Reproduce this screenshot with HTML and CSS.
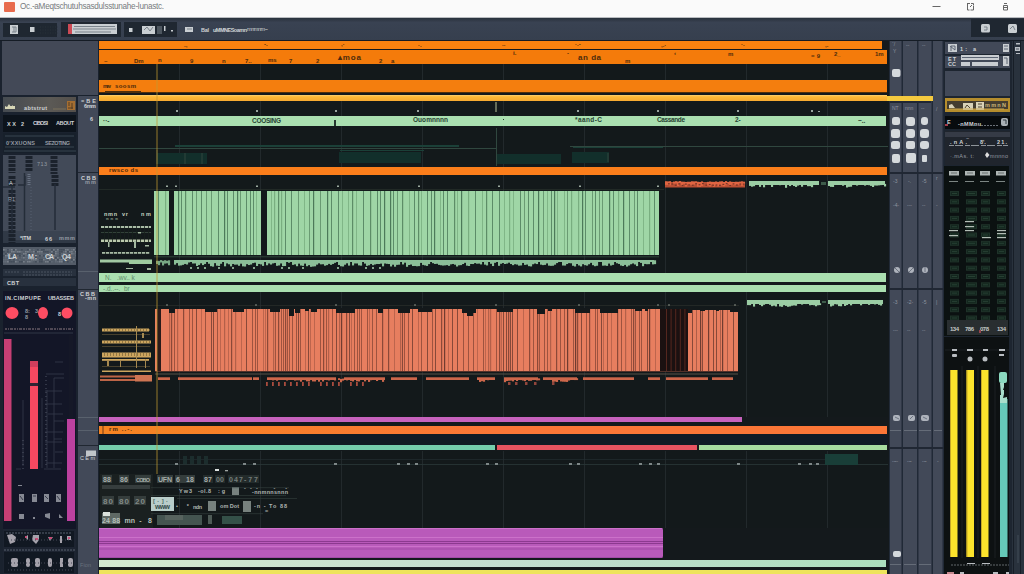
FILE: index.html
```html
<!DOCTYPE html>
<html lang="en">
<head>
<meta charset="utf-8">
<title>Arrangement</title>
<link rel="stylesheet" href="styles.css">
</head>
<body>
<div class="app">
  <header class="titlebar">
    <span class="app-icon"></span>
    <span class="title">Oc.-aMeqtschutuhsasdulsstunahe-lunastc.</span>
    <svg class="window-buttons" viewBox="925 0 99 18"><g fill="none" stroke="#666" stroke-width="1"><path d="M932.500 6.500h8M967 3.500h3M967.500 3v7h2M971 3.500h2.500v2M973.500 6v4h-3M970 7l2-2M1003.500 5.500h4v4.500h-4zM1004 3.500h3M1004 7.500h3"/></g></svg>
  </header>

  <nav class="toolbar">
    <svg viewBox="0 18 1024 22">
      <path fill="#1f2731" d="M3 23h54v14h-54zM61 22h60v15h-60zM124 22h53v15h-53zM971 19h53v18h-53z"/>
      <g fill="#c9ced2"><rect x="10" y="25" width="8" height="9"/><rect x="30" y="27" width="4.500" height="5"/><rect x="72" y="24" width="45" height="10"/><rect x="129" y="28" width="3.500" height="4"/><rect x="142" y="26" width="13" height="8"/><path d="M164 26h1.500v5h-1.500zM171 30h2v1.500h-2z"/><rect x="185" y="27" width="8" height="5"/><rect x="981" y="24" width="9" height="8.500" rx="1.500"/><rect x="1008" y="24" width="9" height="9" rx="1.500"/></g>
      <rect x="68" y="24" width="4" height="10" fill="#cc4a55"/>
      <path fill="none" stroke="#7a838b" stroke-width="1" d="M12 27h4v5h-4M14 27v5M74 26.500h41M73 29h43M75 32h36M144 30l3-3 3 4 3-4M187 29h5M984 27h3v3h-3M1010 29l3-3 2 4"/>
      <path stroke="#29323b" stroke-dasharray="1 1.500" d="M40 27h18M40 30h18M40 33h18"/>
      <rect x="157" y="26" width="5" height="8" fill="#4d565f"/>
      <text x="201" y="31.500" class="t light b" textLength="8">Bal</text><text x="213" y="31.500" class="t light b" textLength="34">uMMNESoamn</text><text x="247" y="31" class="t light" textLength="21">mnmnm~</text>
    </svg>
  </nav>

  <main class="workspace">
    <aside class="side">
      <div class="browser-blank"></div>
      <div class="side-columns">
        <section class="device">
          <div class="device-title"><svg viewBox="3 97 73 15"><path fill="#d6d6b6" d="M5 109v-3l2 1 2-3 2 3 2-2v4zM8 106h7v3h-7z"/><text x="24" y="110" class="t light b" textLength="23">abtstrut</text><rect x="67" y="101" width="8" height="9" fill="#a56e31"/><path stroke="#533c25" d="M69 102v4M72 103v6M68 108h5"/><path stroke="#7c725d" d="M53 109h13"/></svg></div>
          <div class="device-tabs"><svg viewBox="3 115 73 17"><text x="7" y="125.500" class="t light b" textLength="9">XX</text><text x="21" y="125.500" class="t light b" textLength="6">2</text><text x="33" y="125" class="t light b" textLength="15">CIBOSI</text><text x="56" y="125" class="t light b" textLength="18">ABOUT</text></svg></div>
          <div class="device-modes"><svg viewBox="3 133 73 20"><path stroke="#394451" fill="none" d="M5 136h69M5 147h69M4 151h72"/><text x="6" y="145" class="t mid b" textLength="29">0'XXUONS</text><text x="45" y="145" class="t mid b" textLength="25">SEZOTING</text></svg></div>
          <div class="device-faders"><svg viewBox="3 155 73 88">
            <path fill="#303946" d="M3 231h73v12h-73z"/><path fill="#3a4351" d="M14 231h62v9h-62z"/>
            <path stroke="#1b222c" stroke-width="7" stroke-dasharray="3 1" d="M12 156v17M29 156v16M54 156v18M55 175v11M12 176v10M12 190v55"/>
            <path fill="none" stroke="#242d38" stroke-width="1.500" d="M24.500 173v58M55 184v46M18 185h7v-9M3 187h12M12 186v46"/>
            <path stroke="#667080" stroke-width="3" stroke-dasharray="1 1" d="M29 174v12"/><path stroke="#566070" stroke-dasharray="1 2" d="M31 187v43"/>
            <text x="37" y="166" class="t mid" textLength="10">713</text><text x="9" y="185" class="t light">A</text><text x="8" y="201" class="t mid">R1</text>
            <text x="20" y="240" class="t light b" textLength="11">*ITM</text><text x="45" y="241" class="t light b" textLength="7">66</text><text x="59" y="240" class="t mid b" textLength="16">mmm</text></svg></div>
          <div class="device-pads"><svg class="noise" data-box="3,247,73,18" data-colors="#616a76,#434d5a,#555e6a,#78808a" viewBox="3 247 73 18"></svg></div>
          <div class="device-sub"><svg viewBox="3 267 73 22"><path fill="#28313e" d="M3 269h73v7h-73zM3 278h73v8h-73z"/><path stroke="#4b5461" stroke-dasharray="2 1" d="M5 272h14M23 272h49M23 275h49"/><text x="7" y="285" class="t light b" textLength="12">CBT</text></svg></div>
          <div class="synth"><svg viewBox="3 291 73 238">
            <text x="5" y="299.500" class="t light b" textLength="36">IN.CIMPUPE</text><text x="48" y="299.500" class="t light b" textLength="26">UBASSEB</text>
            <g fill="#ff4d63"><ellipse cx="12" cy="313" rx="6.500" ry="6"/><ellipse cx="43" cy="313" rx="5" ry="6"/><ellipse cx="67" cy="313" rx="5.500" ry="5.500"/></g>
            <text x="25" y="313" class="t mid b">8:</text><text x="25" y="319" class="t mid b">8</text><text x="35" y="313" class="t mid b">3</text><text x="58" y="316" class="t light b">8</text>
            <path stroke="#8d7a83" stroke-dasharray="2 1 1 1 3 1" d="M5 329h35M45 329h28"/><path stroke="#303746" d="M4 333h69"/>
            <path stroke="#151827" stroke-width="4" d="M71 335v85"/>
            <rect x="4" y="339" width="7.500" height="182" fill="#c63f74"/><rect x="67" y="419" width="8" height="102" fill="#bc419f"/>
            <rect x="30" y="361" width="8" height="108" fill="#f74860"/><path fill="#d33e5c" d="M30 361h8v6h-8z"/><path fill="#312332" d="M30 383h8v3h-8z"/>
            <path fill="none" stroke="#353b4b" stroke-width=".8" d="M55 362h8M46 374h18M54 378h10M42 398v70M47 390v78M54 378v90M45 391h17M45 404h17M48 414h15M54 421h10M45 432h18M54 439h8M45 442h17M55 452h8M46 463h16M44 469h17M16 469h5M23 400v66"/>
            <path stroke="#505566" stroke-width="1" stroke-dasharray="1 3" d="M46 376v92M23 440v30"/>
            <g fill="#868993"><rect x="19" y="494" width="5" height="8"/><rect x="32" y="494" width="5" height="8"/><rect x="44" y="494" width="5" height="8"/><rect x="56" y="494" width="5" height="8"/><path d="M19 514h5v5h-5zM45 514l5-1v6l-5-2zM33 517h2v2h-2zM59 514l4 4h-4zM18 485h4v1h-4z"/></g>
            <path stroke="#222638" stroke-width=".8" d="M20 496l3 4M33 496h3M45 496l3 3M57 496l3 4"/></svg></div>
          <div class="synth-pads"><svg viewBox="3 529 73 45"><path fill="#111822" d="M4 531h70v16h-70zM4 552h70v21h-70z"/><path stroke="#59606e" stroke-dasharray="2 1" d="M4 550h71M6 533h66"/><g fill="#a5a2ab"><path d="M7 535l5-1 4 3-1 5-5 2zM25 537l3-2v5zM33 535h6v5l-3 4-4-4zM48 537h5l-3 4zM60 536h2v7h-2zM67 536h4v4h-4z"/><rect x="11" y="558" width="7" height="9" rx="2"/><rect x="26" y="558" width="4" height="9" rx="2"/><rect x="35" y="558" width="5" height="9" rx="2"/><rect x="48" y="558" width="4" height="9" rx="2"/><rect x="60" y="558" width="3" height="9"/><rect x="68" y="558" width="5" height="9" rx="2"/></g><path stroke="#c54d76" stroke-width="2" d="M25 537h2M35 539h3M49 538h3M68 538h2"/><path stroke="#464957" stroke-dasharray="1 2" d="M8 563h64M8 540h64M8 570h64"/></svg></div>
        </section>
        <section class="heads"><svg viewBox="78 96 20 478">
          <g class="b"><text x="81" y="103" class="t light" textLength="15">=BE</text><text x="84" y="108" class="t light" textLength="12">6mm</text><text x="90" y="121" class="t light" font-size="7">6</text><text x="81" y="180" class="t light" textLength="15">CBB</text><text x="85" y="184" class="t mid" textLength="11">mm</text><text x="80" y="296" class="t light" textLength="15">CBB</text><text x="85" y="300" class="t light" textLength="11">-mn</text></g>
          <text x="80" y="460" class="t light" textLength="15">CEm</text><rect x="86" y="450.500" width="10" height="5.500" fill="#c0c5c9"/>
          <path stroke="#202731" d="M78 172.500h20M78 289.500h20M78 445.500h20"/><path stroke="#59616d" d="M78 271.500h20M78 417.500h20M78 430.500h20"/><text x="80" y="567" class="t dim" textLength="11">Fion</text>
        </svg></section>
      </div>
    </aside>

    <section class="timeline">
      <div class="bar ruler"><svg viewBox="99 41 783 8"><g class="ink b"><text x="184" y="47">.,</text><text x="264" y="46">-.</text><text x="341" y="46">,·</text><text x="418" y="47">·.</text><text x="502" y="46">..</text><text x="575" y="46">·.-</text><text x="661" y="47">,.·</text><text x="741" y="46">·.</text><text x="825" y="47">,.</text></g></svg></div>
      <div class="bar markers"><svg viewBox="99 50 788 14"><g class="ink b"><text x="104" y="63">~</text><text x="134" y="63">Dm</text><text x="158" y="62">n</text><text x="190" y="63">9</text><text x="222" y="63">n</text><text x="245" y="63">7..</text><text x="268" y="62">ms</text><text x="289" y="63">7</text><text x="316" y="63">2</text><text x="338" y="60" class="big" textLength="23">▴moa</text><text x="379" y="63">2</text><text x="391" y="63">a</text><text x="513" y="55">i.</text><text x="567" y="55">-</text><text x="578" y="60" class="big" textLength="23">an da</text><text x="625" y="63">m</text><text x="674" y="55">‹</text><text x="728" y="56">m</text><text x="811" y="58" textLength="9">=9</text><text x="834" y="56">2_</text><text x="875" y="56">1m</text></g></svg></div>
      <div class="gap grid h16"></div>
      <div class="bar section"><svg viewBox="99 80 788 13"><g class="ink b"><text x="103" y="88" textLength="8">mw</text><text x="115" y="88" textLength="21">soosm</text></g><path stroke="#51300c" d="M105 91.500h36M99 92.500h788"/></svg></div>
      <div class="bar automation"></div>
      <div class="gap grid h15"><svg viewBox="99 101 789 15"><path fill="#99a59f" d="M176 110h2v2h-2zM256 110h2v2h-2zM335 110h2v2h-2zM417 110h2v2h-2zM577 110h2v2h-2zM657 110h2v2h-2zM737 110h2v2h-2zM811 110h2v2h-2zM818 111h2v1h-2z"/><path fill="#646d59" d="M495 102h2v10h-2z"/></svg></div>
      <div class="bar mint cue"><svg viewBox="99 116 787 10"><g class="green-ink b"><text x="103" y="122.500">··-</text><text x="252" y="123" textLength="29">COOSING</text><text x="413" y="122" textLength="35">Ouomnnnn</text><text x="575" y="122" textLength="27">*aand-C</text><text x="657" y="122" textLength="28">Cassande</text><text x="735" y="122">2-</text><text x="858" y="123">~..</text></g><path fill="#26362f" d="M334 120h2v6h-2zM503 119h1v1h-1z"/></svg></div>
      <div class="gap grid h40"><svg viewBox="99 126 789 41"><path fill="#122f2b" d="M157 153h50v11h-50zM339 152h82v11h-82zM497 154h64v10h-64zM572 152h37v11h-37z"/><path fill="#1b4038" d="M175 145h284v2h-284zM340 150h84v1h-84zM573 147h90v1h-90z"/><path stroke="#30473f" fill="none" d="M99 148.500h397M570 146.500h318M157 150v14M185 153v11M202 153v11M496.500 128v38M608 153v9"/></svg></div>
      <div class="bar orange"><svg viewBox="99 167 788 8"><text x="109" y="172" class="ink b" textLength="29">rwsco ds</text></svg></div>
      <div class="track drums grid"><svg id="drums" viewBox="99 175 789 98"></svg></div>
      <div class="bar mint b8"><svg viewBox="99 273 787 9"><text x="105" y="280" class="green-ink faint">N.   .wv.. k</text></svg></div>
      <div class="bar mint b6"><svg viewBox="99 285 787 7"><text x="103" y="290.500" class="green-ink faint">-.d..--.  br</text></svg></div>
      <div class="track bass grid"><svg id="bass" viewBox="99 292 789 125"></svg></div>
      <div class="bar purple-line"></div>
      <div class="bar coral-line"><svg viewBox="99 426 788 8"><text x="109" y="431" class="ink b" textLength="23">rm ..-.</text><path stroke="#713817" d="M103 426v8"/></svg></div>
      <div class="gap h11 navy"></div>
      <div class="scenes"><i class="scene teal"></i><i class="scene red"></i><i class="scene lime"></i></div>
      <div class="track sampler grid"><svg id="sampler" viewBox="99 451 789 77"></svg></div>
      <div class="audio-clip"><svg viewBox="99 528 564 30"><path stroke="#813285" d="M99 541.500h564M99 543.500h564" opacity=".8"/><path stroke="#cc71ca" d="M99 528.500h564M99 546.500h564M99 537.500h564"/><path stroke="#a34ca7" d="M99 549h564M99 557.500h564"/></svg></div>
      <div class="bar pale"></div>
      <div class="bar yellow"></div>
      <svg class="playhead" viewBox="0 0 2 410"><path d="M1 0v410" stroke="#c29a32" stroke-width="1" opacity=".75"/></svg>
      <i class="automation-tail"></i>
    </section>

    <section class="strips"><svg viewBox="889 41 55 533">
      <path fill="#202936" d="M889 41h55v533h-55z"/><g fill="#424958"><path d="M890 41h11.500v533h-11.500zM903 41h14v533h-14zM918.500 41h13v533h-13zM933 41h9.500v533h-9.500z"/></g>
      <path stroke="#202733" stroke-width="2" d="M889 102h42M889 173h55M889 289h55M889 448h55"/>
      <path stroke="#747b86" d="M890 430.500h11M904 430.500h13M919 430.500h12M934 430.500h8M890 564.500h11M904 564.500h12M919 564.500h12" opacity=".7"/>
      <g fill="#d5d9dc"><rect x="892" y="69" width="8.500" height="8" rx="2"/><rect x="892" y="117" width="8" height="8" rx="2.500"/><rect x="906" y="117" width="9" height="9" rx="3"/><rect x="921" y="117" width="7" height="8" rx="3"/><rect x="891" y="129" width="9" height="9" rx="2.500"/><rect x="906" y="129" width="9" height="9" rx="3"/><rect x="920" y="129" width="9" height="9" rx="3"/><rect x="891" y="141" width="9" height="8" rx="2.500"/><rect x="906" y="141" width="9" height="8" rx="2"/><rect x="920" y="141" width="9" height="8" rx="3"/><rect x="892" y="154" width="8" height="9" rx="2"/><rect x="906" y="153" width="10" height="10" rx="2"/><rect x="922" y="155" width="5" height="7" rx="1"/><rect x="893" y="551" width="8" height="6" rx="2"/></g>
      <g class="strip-text"><text x="892" y="110">NT</text><text x="905" y="110">nnn</text><text x="921" y="110">--</text><text x="936" y="111" font-size="9">/</text><text x="892" y="46">`/</text><text x="893" y="53">Y</text><text x="906" y="47">--</text><text x="922" y="47">--</text><text x="893" y="183">-3</text><text x="908" y="183">-.</text><text x="922" y="183">-5</text><text x="936" y="180">r</text><text x="893" y="207">-4-</text><text x="907" y="207">---</text><text x="922" y="207">--</text><text x="936" y="207">-</text><text x="893" y="304">-3</text><text x="907" y="304">-2-</text><text x="922" y="304">-5</text><text x="936" y="304">|</text><text x="893" y="332">---</text><text x="907" y="332">--</text><text x="922" y="332">--</text><text x="892" y="463">-~-</text><text x="907" y="463">-~</text><text x="922" y="463">-~</text><text x="937" y="463">-</text></g>
      <g fill="#aeb3bc"><circle cx="897" cy="270" r="3"/><circle cx="911" cy="270" r="3"/><circle cx="925" cy="270" r="3"/><rect x="893" y="415" width="7" height="6" rx="2"/><rect x="908" y="415" width="7" height="6" rx="2"/><rect x="921" y="415" width="8" height="6" rx="2"/></g><path stroke="#6c7380" d="M895 268l4 4M909 272l4-4M925 267v5M895 417l4 2M910 419l3-3M923 417l4 2" fill="none"/>
    </svg></section>

    <aside class="mixer">
      <div class="mix-head"><svg viewBox="944 41 68 56"><path fill="#424958" d="M945 42h65v12h-65zM945 56h65v12h-65zM945 71h65v25h-65z"/><g fill="#c9cdd1"><path d="M948 44h9v8h-9zM1003 44h6v8h-6zM961 55h38v5h-38zM961 62h9v4h-9zM972 62h26v4h-26zM1003 56h6v10h-6z"/></g><path stroke="#5c6573" fill="none" d="M950 46l5 4v-4h-4v5M1004 46h4M1004 49h4M962 57.500h36M1004 58h3v6"/><text x="960" y="51" class="t light b" textLength="16">1: a</text><text x="948" y="61" class="t light b" textLength="8">ET</text><text x="948" y="66" class="t light b" textLength="8">CC</text></svg></div>
      <div class="mix-gold"><svg viewBox="945 98 65 14"><path fill="#443d30" d="M947 101h61v8h-61z"/><g fill="#d9d2b8"><path d="M949 108v-3l3-1 3 4zM963 103h10v7h-10zM976 102h8v8h-8z"/></g><path stroke="#514632" fill="none" d="M965 108l2-3 3 3M978 104h4M978 107h4"/><text x="985" y="107" class="t gold b" textLength="21">mmnN</text><path stroke="#c6a655" d="M949 109h55"/></svg></div>
      <div class="mix-select"><svg viewBox="945 116 65 13"><text x="947" y="124" class="t light b" font-size="8">E</text><text x="958" y="125.500" class="t light b" textLength="23">-nMMnu</text><path stroke="#6b7078" stroke-dasharray="2 1" d="M960 125.500h39"/><rect x="1001" y="118" width="7" height="8" rx="2" fill="#a9afb3"/><path d="M1003 120h3v4" fill="none" stroke="#333b41"/><rect x="945" y="124" width="3" height="2" fill="#a33c4a"/></svg></div>
      <div class="mix-info"><svg viewBox="945 131 65 34"><path fill="#363b46" d="M945 132h65v5h-65z"/><path stroke="#8e949a" d="M949 145.500h59" stroke-dasharray="5 1 8 2"/><text x="950" y="144" class="t light b" textLength="17">.nA.</text><text x="966" y="140" class="t mid">~</text><text x="980" y="144" class="t light b">8'.</text><text x="997" y="144" class="t light b" textLength="10">21.</text><text x="950" y="158" class="t mid" textLength="24">·.mAs. t:</text><text x="990" y="158" class="t mid" textLength="18">mnnno</text><path fill="#ddd" d="M987 152l2.500 3-2.500 3-2-3z"/></svg></div>
      <div class="mix-leds"><svg id="leds" viewBox="944 166 68 170"></svg></div>
      <div class="mix-meters"><svg viewBox="944 337 68 237">
        <path fill="#0d1112" d="M944 337h65v237h-65z"/><path stroke="#303437" d="M945 350h64M962 366v192M978 366v192M995 366v192" opacity=".45"/>
        <g fill="#fce32c"><path d="M950 370h7.500v187h-7.500zM966.500 370h7.500v187h-7.500zM981 370h7.500v187h-7.500z"/></g><g fill="#c6a827"><path d="M950 370h1v187h-1zM966.500 370h1v187h-1zM981 370h1v187h-1z"/></g>
        <path fill="#65c9b9" d="M1000 399h7.500v158h-7.500z"/><rect x="999" y="372" width="8" height="11" rx="2" fill="#8bd9bf"/><path fill="#a8decb" d="M1000 383h4v4l-1 3h1v4l-1 4 4-1v6h-7v-8h1z"/>
        <g fill="#b9bdc1"><rect x="952" y="349" width="5" height="2"/><rect x="952" y="354" width="5" height="3" rx="1"/><rect x="967" y="349" width="6" height="2"/><circle cx="970" cy="359" r="2.500"/><rect x="983" y="349" width="5" height="2"/><circle cx="985" cy="359" r="2.500"/><rect x="999" y="349" width="6" height="2"/><rect x="999" y="354" width="5" height="2"/><path d="M967 563h8v1h-8zM982 563h8v1h-8zM960 572h4v2h-4zM993 572h5v2h-5zM1006 572h3v2h-3z"/></g><path fill="#c4888e" d="M947 572h7v2h-7z"/><path stroke="#63686b" stroke-dasharray="2 1" d="M951 565h58"/>
      </svg></div>
    </aside>
    <div class="edge"><svg viewBox="1012 41 12 533"><path fill="none" stroke="#171e27" d="M1013.500 41v533M1020.500 41v533"/><path stroke="#434d58" d="M1018 535v28"/><path fill="#b9bec4" d="M1016 43h4v1.500h-4zM1015 47h5v4h-5zM1016 53h4v1h-4z"/><path stroke="#4b545e" d="M1016 49h3"/></svg></div>
  </main>
</div>
<script src="app.js"></script>
</body>
</html>
```

FILE: styles.css
```css
* { box-sizing: border-box; }
body { margin: 0; background: #141a22; font-family: "Liberation Sans", Arial, sans-serif; }
svg { display: block; width: 100%; height: 100%; }
text { font-family: "Liberation Sans", Arial, sans-serif; font-size: 6px; white-space: pre; }
.app { display: flex; flex-direction: column; width: 1024px; height: 574px; overflow: hidden; }

.titlebar { display: flex; align-items: flex-start; height: 18px; flex: none; background: #fafafa; border-bottom: 1px solid #b9bcc0; padding: 2px 0 0 4px; }
.app-icon { width: 11px; height: 10px; border-radius: 1px; background: #e86b4d; }
.title { margin-left: 5px; width: 160px; font-size: 8.200px; line-height: 10px; letter-spacing: -.28px; color: #777a7e; white-space: nowrap; }
.window-buttons { width: 99px; height: 18px; margin: -2px 0 0 auto; }
.toolbar { height: 23px; flex: none; background: linear-gradient(#29313c, #394252 20%, #363f4e); border-bottom: 1px solid #151c25; }
.toolbar svg { height: 22px; }
.workspace { display: flex; flex: 1; min-height: 0; }

.t { font-size: 5.500px; }
.b, .b text { font-weight: bold; }
.light { fill: #d0d4d6; }
.mid { fill: #949ba3; }
.dim { fill: #69717e; }
.gold { fill: #cbb678; }
.ink, .ink text { fill: #4d2b0c; font-size: 6px; }
.ink .big { font-size: 8px; }
.green-ink, .green-ink text { fill: #263f32; font-size: 6.500px; }
.faint { opacity: .55; }
.strip-text text { fill: #8e95a0; font-size: 5px; }

.side { width: 99px; flex: none; display: flex; flex-direction: column; padding-left: 2px; background: #1a222e; }
.browser-blank { height: 54px; margin-right: 1px; background: #434957; margin-bottom: 1px; }
.side-columns { display: flex; height: 478px; }
.device { width: 76px; padding: 1px 2px 0 1px; display: flex; flex-direction: column; }
.device-title { height: 15px; background: linear-gradient(90deg, #454b51, #5b5955 65%, #534f4b); margin-bottom: 3px; }
.device-tabs { height: 17px; background: #0c131b; margin-bottom: 1px; }
.device-modes { height: 20px; background: #17202b; margin-bottom: 2px; }
.device-faders { height: 88px; background: #424a58; margin-bottom: 4px; }
.device-pads { height: 18px; background: #545c68; margin-bottom: 2px; }
.device-sub { height: 22px; margin-bottom: 2px; }
.synth { height: 238px; background: #131627; }
.synth-pads { height: 45px; background: #1d2431; }
.heads { width: 20px; background: #424958; }

.timeline { position: relative; width: 790px; flex: none; background: #14191c; display: flex; flex-direction: column; align-items: flex-start; }
.bar { flex: none; width: 788px; }
.ruler { width: 783px; height: 8px; background: #fa820f; margin-bottom: 1px; }
.markers { height: 14px; background: #f47b0b; }
.section { height: 13px; background: #f47e0e; margin-bottom: 2px; }
.automation { height: 6px; background: linear-gradient(#ffd070, #ffb935 30%, #f7aa31); }
.mint { width: 787px; background: #aadfb0; }
.cue { height: 10px; }
.orange { height: 8px; background: #fb7e1b; }
.b8 { height: 9px; margin-bottom: 3px; }
.b6 { height: 7px; }
.purple-line { width: 643px; height: 5px; background: #c762bd; margin-bottom: 4px; }
.coral-line { height: 8px; background: linear-gradient(90deg, #f58422, #fb7637 50%); }
.pale { width: 787px; height: 7px; margin-top: 2px; background: linear-gradient(90deg, #d4ead0, #c3ddd0 50%, #acdfbd); }
.yellow { height: 4px; margin-top: 3px; background: #eee45c; }
.gap, .track { width: 789px; flex: none; }
.h11 { height: 11px; }
.h15 { height: 15px; }
.h16 { height: 16px; }
.h40 { height: 41px; }
.navy { background: #101a25; }
.grid { background: repeating-linear-gradient(90deg, transparent 0 80px, #22292c 80px 81px) 0 0 #13191b; }
.drums { height: 98px; }
.bass { height: 125px; }
.scenes { display: flex; width: 788px; height: 6px; gap: 2px; flex: none; padding-bottom: 1px; }
.scene { display: block; }
.teal { width: 396px; background: #74cdae; }
.red { width: 200px; background: #e65361; }
.lime { flex: 1; background: #a7dca0; }
.sampler { height: 77px; }
.audio-clip { width: 564px; height: 30px; background: #b95aba; border-radius: 0 2px 2px 0; overflow: hidden; flex: none; }
.playhead { position: absolute; left: 57px; top: 23px; width: 2px; height: 410px; }
.automation-tail { position: absolute; left: 788px; top: 55px; width: 46px; height: 5px; background: #f5ca3f; z-index: 2; }

.strips { width: 55px; flex: none; }
.mixer { width: 68px; flex: none; display: flex; flex-direction: column; background: #1d2530; }
.mix-head { height: 56px; margin-bottom: 1px; }
.mix-gold { width: 65px; height: 14px; margin-left: 1px; background: #b58d2d; margin-bottom: 4px; }
.mix-select { width: 65px; height: 13px; margin-left: 1px; background: #080b0e; margin-bottom: 2px; }
.mix-info { width: 65px; height: 34px; margin-left: 1px; background: #20252d; margin-bottom: 1px; }
.mix-leds { height: 170px; margin-bottom: 1px; }
.mix-meters { height: 237px; }
.edge { width: 12px; background: #29323d; }
```

FILE: app.js
```js
const NS = 'http://www.w3.org/2000/svg';
let seed = 37;
const rnd = () => (seed = (seed * 16807) % 2147483647) / 2147483647;
const byId = id => document.getElementById(id);

function rect(svg, x, y, w, h, fill) {
  const r = document.createElementNS(NS, 'rect');
  Object.entries({ x, y, width: w, height: h, fill }).forEach(([k, v]) => r.setAttribute(k, v));
  svg.appendChild(r);
}
function label(svg, x, y, value, fill, width, size = 5.5) {
  const t = document.createElementNS(NS, 'text');
  t.setAttribute('x', x); t.setAttribute('y', y); t.setAttribute('fill', fill);
  t.setAttribute('class', 'b');
  t.style.fontSize = size + 'px';
  if (width) t.setAttribute('textLength', width);
  t.textContent = value;
  svg.appendChild(t);
}
function stripes(svg, x0, x1, y0, y1, fill, lines, step = 2) {
  rect(svg, x0, y0, x1 - x0, y1 - y0, fill);
  for (let x = x0 + 4; x < x1 - 2; x += step + Math.floor(rnd() * 5)) {
    rect(svg, x, y0, rnd() > .7 ? 1.2 : .8, y1 - y0, lines[Math.floor(rnd() * lines.length)]);
  }
}
function fringe(svg, x0, x1, y, h, fill, density = .9) {
  for (let x = x0; x < x1; x += 2) {
    if (rnd() < density) rect(svg, x, y + rnd(), 2.1, h * (.4 + rnd() * .6), fill);
  }
}

// Drum track: chord clips, their velocity lane and the note list
const drums = byId('drums');
rect(drums, 99, 189, 565, .6, '#2c3430');
[166, 175, 256, 337, 418, 498, 579, 657].forEach(x => rect(drums, x, 185.5, 2, 1.5, '#9caaa0'));
[[154, 169], [174, 261], [267, 659]].forEach(([a, b]) =>
  stripes(drums, a, b, 191, 255, '#9fd6a6', ['#4c7a59', '#5d8d67', '#79ae80', '#4c7a59'], 3));
rect(drums, 154, 256.5, 505, .7, '#3d5948');
fringe(drums, 156, 172, 260, 5, '#78a884');
fringe(drums, 174, 655, 260, 6, '#8bbf98');
rect(drums, 174, 260, 480, 2, '#8bbf98');
for (let x = 190; x < 380; x += 7) if (rnd() > .35) rect(drums, x, 267, 2, 2, '#85a68d');
label(drums, 104, 216, 'nmn  vr', '#c6d6c1', 24);
label(drums, 141, 216, 'nm', '#c6d6c1', 10);
label(drums, 106, 220, 'mmm  .', '#8ba18e', 20, 3);
rect(drums, 101, 226, 50, 2, '#a9bca6');
rect(drums, 101, 232, 50, .7, '#415347');
rect(drums, 101, 239.5, 50, 2.5, '#bbc9ac');
rect(drums, 102, 252, 48, 1.8, '#a6b8a2');
rect(drums, 100, 259.5, 52, 3, '#a2c9a3');
rect(drums, 129, 260, 23, 4, '#9fcc9f');
for (let x = 104; x < 151; x += 4) {
  rect(drums, x, 226, .8, 17, '#17211c');
  rect(drums, x + 1, 251, .8, 3, '#17211c');
}
[[108, 242, 1.5, 5], [134, 241, 2, 7], [138, 232, 3, 1.5], [145, 245, 4, 1.5], [126, 268, 7, 1], [147, 268, 4, 2]].forEach(a => rect(drums, ...a, '#a3b8a0'));
rect(drums, 665, 182, 80, 5.500, '#b94f34');
fringe(drums, 665, 745, 181, 5, '#e06542');
for (let x = 668; x < 743; x += 3.4) rect(drums, x, 183 + rnd() * 2, 1.8, 1.2, '#763527');
function tail(svg, x0, x1, y) {
  rect(svg, x0, y, x1 - x0, 4, '#9bcda4');
  fringe(svg, x0, x1, y + 2.5, 3.5, '#9bcda4', .6);
}
tail(drums, 749, 819, 181); rect(drums, 821, 182, 5, 3, '#3d5b4a'); tail(drums, 828, 885, 181);

// Bass track: clip silhouette with notched top edge
const bass = byId('bass');
rect(bass, 99, 305, 640, .6, '#30332f');
[166, 255, 335, 414, 495, 578, 657, 668, 734].forEach(x => rect(bass, x, 304.5, 2, 1, '#8a8f85'));
stripes(bass, 155, 660, 309, 371, '#e77e5f', ['#713c30', '#8c4938', '#b36049', '#8c4938']);
rect(bass, 157, 309, 4, 62, '#2a1b1a');
rect(bass, 162, 309, 6, 62, '#e77e5f');
stripes(bass, 688, 738, 310, 371, '#e77e5f', ['#713c30', '#a15642']);
rect(bass, 660, 309, 28, 62, '#1b1111');
for (let x = 666; x < 687; x += 4.6) rect(bass, x, 309, 1, 62, '#55271f');
[[169, 6, 4], [205, 12, 3], [233, 11, 3], [270, 10, 3], [289, 5, 7], [295, 5, 4], [305, 4, 2], [311, 6, 3], [336, 19, 4], [378, 5, 4], [398, 12, 4], [418, 14, 3], [462, 14, 4], [467, 6, 7], [497, 16, 3], [537, 8, 5], [548, 4, 2], [575, 15, 4], [600, 18, 4], [635, 7, 2], [645, 3, 2], [688, 4, 4], [700, 5, 2], [716, 3, 2], [730, 8, 3]].forEach(([x, w, h]) => rect(bass, x, 308, w, h + 1, '#14191b'));
rect(bass, 155, 371, 583, .8, '#63382e');
rect(bass, 155, 373.5, 583, 1, '#585249');
[[158, 170], [178, 252], [253, 259], [267, 336], [344, 385], [391, 417], [426, 469], [477, 495], [504, 538], [543, 577], [583, 634], [648, 660], [666, 708], [712, 733]].forEach(([a, b]) => rect(bass, a, 377.3, b - a, 2.7, '#cd674b'));
[[266, 384], [477, 494], [504, 577]].forEach(([a, b]) => fringe(bass, a, b, 378, 3.5, '#cd674b', .55));
for (let x = 266; x < 384; x += 6) if (rnd() > .25) rect(bass, x, 382, 1.8, 4, '#a94c3e');
[508, 515, 525, 534, 552].forEach(x => rect(bass, x, 382, 2.500, 3, '#91463c'));
[[328.5, 47, 3], [340.5, 49, 3], [352.5, 49, 5], [359, 47, 1.8], [370.5, 49, 1.5]].forEach(([y, w, h]) => rect(bass, 102, y, w, h, '#cca55e'));
[334, 346, 366].forEach(y => rect(bass, 102, y, 48, .6, '#6c5b3b'));
for (let x = 104; x < 150; x += 3) [[329, 2], [341, 2], [353, 3]].forEach(([y, h]) => rect(bass, x, y, .7, h, '#7a6439'));
[[107, 361, 2, 5], [120, 361, 1, 6], [136, 326, 1, 42], [142, 333, 2, 5], [145, 359, 1, 9]].forEach(a => rect(bass, ...a, '#a58950'));
rect(bass, 100, 375.500, 52, 2, '#bd6547'); rect(bass, 100, 379, 52, 2, '#bd6547'); rect(bass, 135, 375, 17, 6.500, '#ce7553');
tail(bass, 747, 820, 300); rect(bass, 822, 301, 4, 2, '#3d5b4a'); tail(bass, 828, 883, 300);

// Sampler track: module rows above the audio clip
const sampler = byId('sampler');
rect(sampler, 99, 459, 729, .6, '#263034'); rect(sampler, 99, 464, 789, .8, '#2b3739');
rect(sampler, 825, 454, 33, 11, '#193e38');
[183, 190, 197, 204].forEach(x => rect(sampler, x, 456, 4, 8, '#1c2d2d'));
[175, 243, 253, 334, 397, 407, 415, 486, 495, 569, 577, 639, 649, 657, 737, 798, 809, 816].forEach(x => rect(sampler, x, 463, 3, 2, '#7e8788'));
rect(sampler, 215, 469, 4, 2, '#dce0df'); rect(sampler, 225, 470, 3, 1.3, '#9da3a2');
rect(sampler, 100, 474, 53, 54, '#1a2020');
rect(sampler, 102, 485, 48, 4, '#363d3d');
[[102, '88'], [119, '86'], [135, 'COBO'], [157, 'UFN'], [175, '6'], [185, '18'], [203, '87'], [215, '00'], [228, '047'], [243, '-77']].forEach(([x, s], i) => {
  rect(sampler, x, 475, s.length > 2 ? 16 : 10, 8, i < 6 ? '#343d3c' : '#232b2b');
  label(sampler, x + 1, 482, s, i < 7 ? '#a6adaa' : '#747c79', s.length > 2 ? 14 : (s.length > 1 ? 8 : 0), s.length > 3 ? 5.5 : 7);
});
[[102, '80'], [118, '80'], [134, '20']].forEach(([x, s]) => { rect(sampler, x, 496, 12, 9, '#353d3c'); label(sampler, x + 1, 504, s, '#818986', 10, 8); });
rect(sampler, 151, 497, 23, 14, '#b9cdca'); label(sampler, 153, 503, '[ · ] ·', '#496762', 15, 6); label(sampler, 155, 509, 'www', '#334b49', 15, 7);
[[179, 493, 'Yw3', 13], [198, 493, '-ol.8', 13], [218, 493, ':g', 7], [244, 490, '---  - -', 43], [252, 494, '-nnmnnsnnn', 36], [176, 508, '• *', 13], [193, 509, 'ndn', 9], [220, 508, 'om Dot', 19], [254, 508, '-n - To 88', 33], [265, 513, '=', 4]].forEach(([x, y, s, w]) => label(sampler, x, y, s, '#afb5b2', w));
[[232, 487, 7, 8], [208, 501, 8, 10], [243, 501, 8, 11]].forEach(a => rect(sampler, ...a, '#77817e'));
[[151, 487.500, 138], [151, 495, 135], [177, 498, 120], [151, 513.500, 112]].forEach(([x, y, w]) => rect(sampler, x, y, w, .6, '#35403f'));
rect(sampler, 157, 515, 45, 10, '#445450'); rect(sampler, 165, 515, 18, 5, '#57635e'); rect(sampler, 208, 515, 4, 9, '#4e5a56'); rect(sampler, 222, 516, 20, 8, '#345048');
rect(sampler, 102, 513, 18, 11, '#5f6964'); rect(sampler, 103, 512, 7, 4, '#dce2dc');
label(sampler, 102, 523, '24 88  mn  -   8', '#b4bfb8', 50, 7);

// LED ladders
const leds = byId('leds');
rect(leds, 944, 166, 65, 170, '#0b1111');
[951, 967, 982, 998].forEach((x, i) => {
  const w = i === 1 ? 11 : 9;
  rect(leds, x - 2, 171, 10, 4.500, '#aeb5b4'); rect(leds, x, 172.500, 6, 1, '#68716e');
  rect(leds, x - 2, 181, 9, 1, '#7c8583');
  for (let y = 191; y < 316; y += 8.3) {
    rect(leds, x - 1, y, w, 5, '#1e3229'); rect(leds, x, y + 1, w - 2, 3, '#14271f'); rect(leds, x + 1, y + 2, w - 4, 1, '#264032');
  }
});
[[949, 230], [949, 235], [965, 221], [965, 226], [965, 230], [982, 237], [997, 230], [997, 233], [997, 237]].forEach(([x, y]) => rect(leds, x, y, 9, 1.2, '#b3bdb6'));
rect(leds, 947, 320, 61, 15, '#292e30');
['134', '786', '078', '134'].forEach((s, i) => label(leds, [950, 965, 980, 997][i], 331, s, '#c3c7c5', 9, 6));
rect(leds, 979, 330, 2, 3, '#94444c');

// Textured pad buttons
document.querySelectorAll('.noise').forEach(svg => {
  const [x, y, w, h] = svg.dataset.box.split(',').map(Number);
  const colors = svg.dataset.colors.split(',');
  for (let i = x; i < x + w; i += 2) for (let j = y + 2; j < y + h - 2; j += 2) rect(svg, i, j, 1.7, 1.5, colors[Math.floor(rnd() * colors.length)]);
  [[8, 'LA'], [28, 'M:'], [45, 'CA'], [62, 'Q4']].forEach(([a, s]) => label(svg, a, 259, s, '#d0d5d7', 9, 7));
});
```
